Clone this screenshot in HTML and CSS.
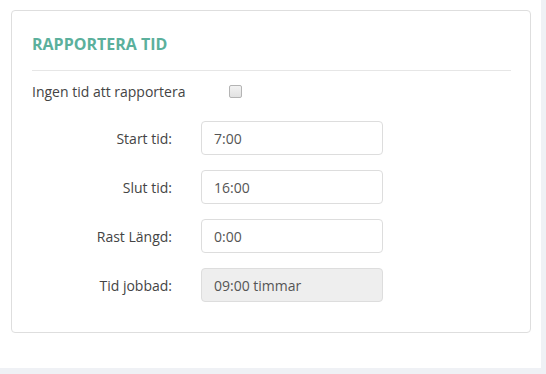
FILE: index.html
```html
<!DOCTYPE html>
<html lang="sv">
<head>
  <meta charset="UTF-8">
  <meta name="viewport" content="width=device-width, initial-scale=1.0">
  <title>Rapportera tid</title>
  <link rel="stylesheet" href="styles.css">
</head>
<body>
  <div class="page">
    <div class="card">
      <h2 class="card-title">RAPPORTERA TID</h2>
      <form id="timeForm">
        <div class="check-row">
          <label for="noTime">Ingen tid att rapportera</label>
          <input type="checkbox" id="noTime">
        </div>

        <div class="form-row">
          <label for="start">Start tid:</label>
          <input type="text" id="start" value="7:00">
        </div>

        <div class="form-row">
          <label for="end">Slut tid:</label>
          <input type="text" id="end" value="16:00">
        </div>

        <div class="form-row">
          <label for="pause">Rast Längd:</label>
          <input type="text" id="pause" value="0:00">
        </div>

        <div class="form-row">
          <label for="worked">Tid jobbad:</label>
          <input type="text" id="worked" value="09:00 timmar" readonly>
        </div>
      </form>
    </div>
  </div>
</body>
</html>
```

FILE: styles.css
```css
body {
  font-family: "Open Sans", "Liberation Sans", sans-serif;
  margin: 0;
  padding: 0;
  background-color: #eff1f5;
  color: #444;
}
.page {
  width: 541px;
  height: 368px;
  box-sizing: border-box;
  padding: 10px 10px 0 11px;
  background: #fff;
}
.card {
  height: 323px;
  box-sizing: border-box;
  padding: 22px 19px 0 20px;
  border: 1px solid #dedede;
  border-radius: 4px;
  background: #fff;
}
.card-title {
  margin: 0;
  padding-bottom: 15px;
  font-size: 16px;
  font-weight: 700;
  color: #5bb09c;
  border-bottom: 1px solid #e6e6e6;
}
.check-row {
  display: flex;
  align-items: center;
  height: 20px;
  margin: 10px 0 20px;
  font-size: 14px;
}
.check-row label {
  width: 197px;
}
.check-row input {
  appearance: none;
  width: 13px;
  height: 13px;
  margin: 0;
  border: 1px solid #b4b4b4;
  border-radius: 2px;
  background: linear-gradient(#f2f2f2, #e2e2e2);
}
.form-row {
  display: flex;
  align-items: center;
  margin-bottom: 15px;
  font-size: 14px;
}
.form-row label {
  width: 140px;
  margin-right: 29px;
  text-align: right;
}
.form-row input {
  width: 182px;
  height: 34px;
  box-sizing: border-box;
  padding: 0 12px;
  border: 1px solid #ddd;
  border-radius: 4px;
  font-family: inherit;
  font-size: 14px;
  color: #555;
}
.form-row input[readonly] {
  background: #eee;
}
```
